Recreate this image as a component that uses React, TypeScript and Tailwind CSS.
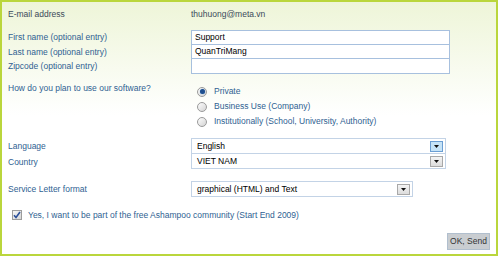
import React from 'react';

const font = { fontFamily: '"Liberation Sans", Arial, sans-serif' };

function Radio({ checked }: { checked?: boolean }) {
  return (
    <span className="relative flex h-[10px] w-[10px] items-center justify-center rounded-full border border-[#9a9a9a] bg-gradient-to-br from-[#fdfdfd] to-[#d4d4d4]">
      {checked && <span className="h-[5px] w-[5px] rounded-full bg-[#1f4f8f] shadow-[0_0_1px_#5fa0e0]" />}
    </span>
  );
}

function DropButton({ active }: { active?: boolean }) {
  return (
    <span
      className={
        'flex h-[11px] w-[13px] items-center justify-center border ' +
        (active ? 'border-[#6b9ed3] bg-[#c5e3f7]' : 'border-[#a8a8a8] bg-gradient-to-b from-[#f4f4f4] to-[#dcdcdc]')
      }
    >
      <svg width="5" height="3" viewBox="0 0 5 3">
        <path d="M0 0h5L2.5 3z" fill="#111" />
      </svg>
    </span>
  );
}

function Select({ value, width, active }: { value: string; width: string; active?: boolean }) {
  return (
    <div className={'flex h-[16px] items-center justify-between border border-[#c3d3e6] bg-white pl-[5px] pr-[2px] text-black ' + width}>
      <span>{value}</span>
      <DropButton active={active} />
    </div>
  );
}

export default function App() {
  return (
    <div
      style={font}
      className="flex h-[256px] w-[498px] flex-col border-2 border-[#bad63c] bg-gradient-to-b from-[#eef5d8] via-white via-45% to-white pl-[6px] text-[8.5px] text-[#2f5f92]"
    >
      <div className="mt-[5px] flex h-[14px] items-center">
        <span className="w-[183px] text-[#3b4a5a]">E-mail address</span>
        <span className="text-[#3b4a5a]">thuhuong@meta.vn</span>
      </div>

      <div className="mt-[9px] flex">
        <div className="flex w-[183px] flex-col">
          <span className="flex h-[15px] items-center">First name (optional entry)</span>
          <span className="flex h-[14px] items-center">Last name (optional entry)</span>
          <span className="flex h-[15px] items-center">Zipcode (optional entry)</span>
        </div>
        <div className="flex w-[259px] flex-col text-black">
          <div className="flex h-[15px] items-center border border-[#a7c0de] bg-white px-[3px]">Support</div>
          <div className="-mt-px flex h-[15px] items-center border border-[#a7c0de] bg-white px-[3px]">QuanTriMang</div>
          <div className="-mt-px flex h-[16px] items-center border border-[#a7c0de] bg-white px-[3px]"></div>
        </div>
      </div>

      <div className="mt-[10px] flex">
        <span className="w-[183px] leading-[8px]">How do you plan to use our software?</span>
        <div className="flex flex-col pl-[6px]">
          <label className="flex h-[15px] items-center gap-[7px]">
            <Radio checked />
            <span>Private</span>
          </label>
          <label className="flex h-[15px] items-center gap-[7px]">
            <Radio />
            <span>Business Use (Company)</span>
          </label>
          <label className="flex h-[15px] items-center gap-[7px]">
            <Radio />
            <span>Institutionally (School, University, Authority)</span>
          </label>
        </div>
      </div>

      <div className="mt-[9px] flex">
        <div className="flex w-[183px] flex-col">
          <span className="flex h-[16px] items-center">Language</span>
          <span className="flex h-[16px] items-center">Country</span>
        </div>
        <div className="flex flex-col">
          <Select value="English" width="w-[255px]" active />
          <div className="-mt-px">
            <Select value="VIET NAM" width="w-[255px]" />
          </div>
        </div>
      </div>

      <div className="mt-[11px] flex">
        <span className="flex h-[16px] w-[183px] items-center">Service Letter format</span>
        <Select value="graphical (HTML) and Text" width="w-[222px]" />
      </div>

      <label className="mt-[11px] flex h-[14px] items-center gap-[6px] pl-[4px]">
        <span className="flex h-[10px] w-[10px] items-center justify-center border border-[#9c9c9c] bg-gradient-to-br from-[#f6f6f6] to-[#d6d6d6]">
          <svg width="8" height="8" viewBox="0 0 8 8">
            <path d="M1 4.2l2 2.3L7 1" fill="none" stroke="#2a4f9a" strokeWidth="1.6" />
          </svg>
        </span>
        <span>Yes, I want to be part of the free Ashampoo community (Start End 2009)</span>
      </label>

      <div className="mt-[11px] flex justify-end pr-[6px]">
        <button className="h-[17px] w-[43px] border border-[#b1bfce] bg-[#c9cdd1] text-[8.5px] text-[#333]" style={font}>
          OK, Send
        </button>
      </div>
    </div>
  );
}
